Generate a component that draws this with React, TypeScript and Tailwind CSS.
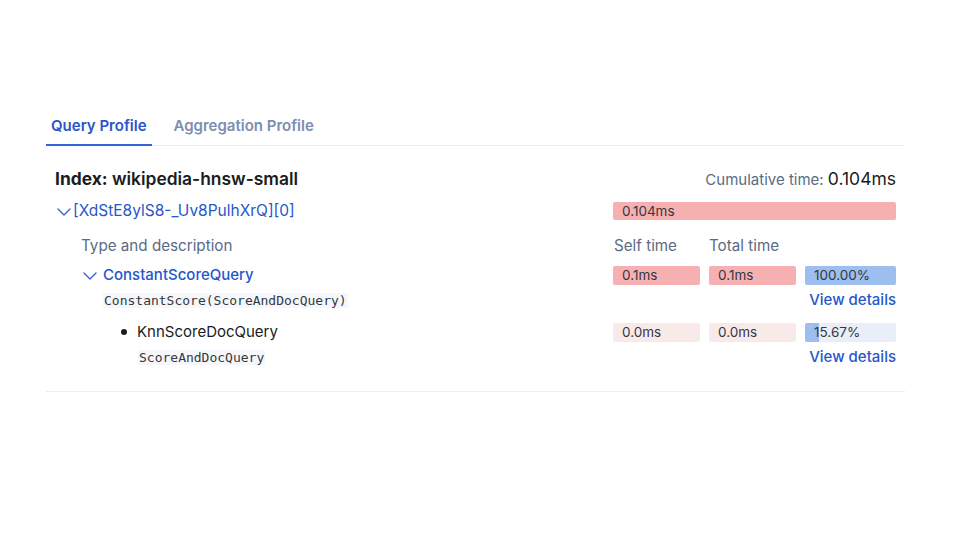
import React from "react";

const sans = { fontFamily: "Inter, 'Noto Sans', sans-serif" };
const mono = { fontFamily: "'DejaVu Sans Mono', 'Liberation Mono', monospace" };

function Chevron() {
  return (
    <svg width="14" height="8" viewBox="0 0 14 8" className="shrink-0" fill="none">
      <path d="M1 1l6 6 6-6" stroke="#2f5fd0" strokeWidth="1.3" strokeLinecap="round" strokeLinejoin="round" />
    </svg>
  );
}

function Cell({ text, bg, fill, pct }: { text: string; bg: string; fill?: string; pct?: number }) {
  return (
    <div className={`relative h-[19px] rounded-[2px] overflow-hidden ${bg}`}>
      {fill && pct !== undefined && (
        <div className={`absolute left-0 top-0 h-full ${fill}`} style={{ width: `${pct}%` }} />
      )}
      <span className="relative block pl-[9px] text-[13.5px] leading-[19px] text-[#343741]">{text}</span>
    </div>
  );
}

function QueryRow({
  depth,
  expandable,
  title,
  desc,
  self,
  total,
  pct,
  strong,
}: {
  depth: "one" | "two";
  expandable: boolean;
  title: string;
  desc: string;
  self: string;
  total: string;
  pct: number;
  strong: boolean;
}) {
  const pinkBg = strong ? "bg-[#f6b0b1]" : "bg-[#f9eaea]";
  return (
    <div>
      <div className="flex items-center h-[20px]">
        <div className={`flex-1 flex items-center ${depth === "one" ? "pl-[28px]" : "pl-[66px]"}`}>
          {expandable ? (
            <span className="mr-[6px] mt-[1px]"><Chevron /></span>
          ) : (
            <span className="mr-[10px] w-[6px] h-[6px] rounded-full bg-[#1a1c21]" />
          )}
          <span className={`text-[15px] leading-[20px] ${expandable ? "text-[#2657c9] font-medium" : "text-[#1a1c21]"}`}>{title}</span>
        </div>
        <div className="w-[283px] grid grid-cols-[87px_87px_91px] gap-x-[9px]">
          <Cell text={self} bg={pinkBg} />
          <Cell text={total} bg={pinkBg} />
          <Cell text={`${pct.toFixed(2)}%`} bg="bg-[#e9eef9]" fill="bg-[#9dbff0]" pct={pct} />
        </div>
      </div>
      <div className="flex items-center h-[20px] mt-[5px]">
        <div className={`flex-1 -mt-[3px] ${depth === "one" ? "pl-[48px]" : "pl-[83px]"}`}>
          <code style={mono} className="text-[13px] leading-[18px] text-[#343741] bg-[#f5f7fa] px-[1px]">{desc}</code>
        </div>
        <a className="text-[15px] leading-[20px] font-medium text-[#2657c9]">View details</a>
      </div>
    </div>
  );
}

export default function App() {
  return (
    <div style={sans} className="w-[956px] h-[556px] bg-white pt-[106px]">
      <div className="ml-[46px] w-[859px]">
        <div className="flex items-end border-b border-[#e9edf3] gap-[17px]">
          <button className="h-[40px] pt-[2px] px-[5px] text-[15px] font-semibold text-[#2a54c8] border-b-2 border-[#3563d8] -mb-px">
            Query Profile
          </button>
          <button className="h-[40px] pt-[2px] px-[5px] text-[15px] font-semibold text-[#7d8db0] -mb-px border-b-2 border-transparent">
            Aggregation Profile
          </button>
        </div>

        <div className="px-[9px] pb-[24px] border-b border-[#e9edf3]">
          <div className="flex items-center justify-between h-[24px] mt-[21px]">
            <h3 className="text-[17.4px] leading-[24px] text-[#1a1c21] font-semibold">
              <span className="font-bold">Index:</span> wikipedia-hnsw-small
            </h3>
            <div className="text-[15px] leading-[24px] text-[#5a6b86]">
              Cumulative time: <span className="text-[17.5px] text-[#1a1c21]">0.104ms</span>
            </div>
          </div>

          <div className="flex items-center h-[20px] mt-[10px]">
            <div className="flex-1 flex items-center pl-[2px]">
              <span className="mr-[2px] mt-[1px]"><Chevron /></span>
              <span className="text-[15.5px] leading-[20px] text-[#2657c9]">[XdStE8ylS8-_Uv8PulhXrQ][0]</span>
            </div>
            <div className="w-[283px] h-[18px] rounded-[2px] bg-[#f6b0b1] pl-[9px] text-[13.5px] leading-[18px] text-[#343741]">
              0.104ms
            </div>
          </div>

          <div className="flex items-center h-[20px] mt-[15px] text-[15.2px] leading-[20px] text-[#5a6b86]">
            <div className="flex-1 pl-[26px]">Type and description</div>
            <div className="w-[283px] flex">
              <span className="w-[96px] pl-[1px]">Self time</span>
              <span>Total time</span>
            </div>
          </div>

          <div className="mt-[9px]">
            <QueryRow
              depth="one"
              expandable
              title="ConstantScoreQuery"
              desc="ConstantScore(ScoreAndDocQuery)"
              self="0.1ms"
              total="0.1ms"
              pct={100}
              strong
            />
          </div>
          <div className="mt-[12px]">
            <QueryRow
              depth="two"
              expandable={false}
              title="KnnScoreDocQuery"
              desc="ScoreAndDocQuery"
              self="0.0ms"
              total="0.0ms"
              pct={15.67}
              strong={false}
            />
          </div>
        </div>
      </div>
    </div>
  );
}
